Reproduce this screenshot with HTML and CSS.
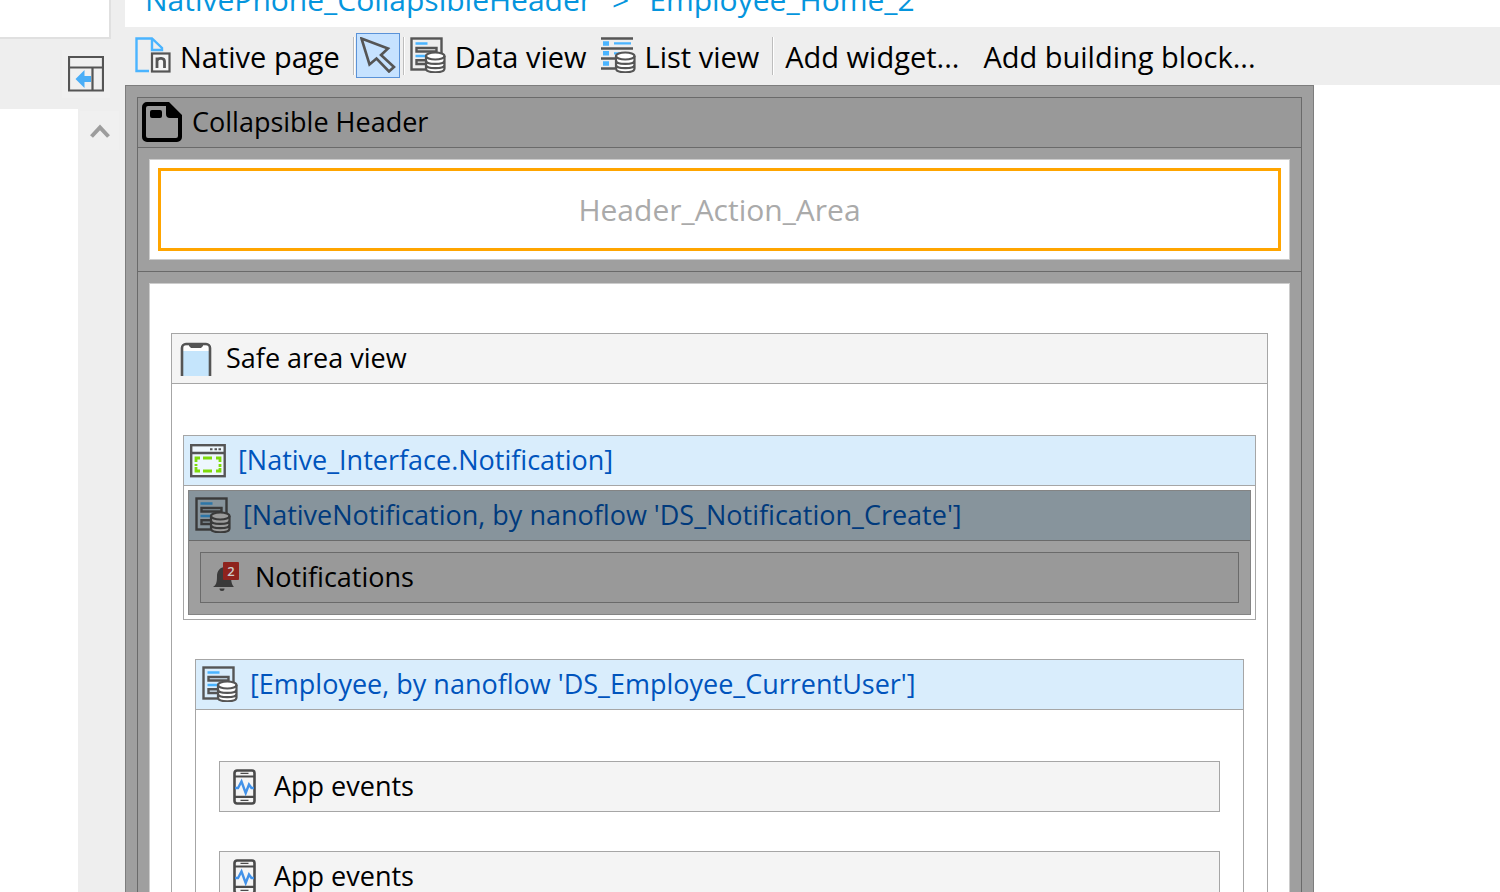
FILE: index.html
```
<!DOCTYPE html>
<html lang="en">
<head>
<meta charset="utf-8">
<title>Employee_Home_2</title>
<link rel="stylesheet" href="styles.css">
</head>
<body>
<svg class="sprite" aria-hidden="true">
  <symbol id="db" viewBox="0 0 36 36">
    <path d="M16 19v12.500c0 5 18.500 5 18.500 0V19z" fill="#fff"/>
    <ellipse cx="25.250" cy="19" rx="9.250" ry="3.800" fill="#fff"/>
    <path d="M16 19v12.500c0 5 18.500 5 18.500 0V19M16 23.200c0 5 18.500 5 18.500 0M16 27.400c0 5 18.500 5 18.500 0" fill="none" stroke="#555" stroke-width="2.200"/>
    <ellipse cx="25.250" cy="19" rx="9.250" ry="3.500" fill="none" stroke="#555" stroke-width="2.200"/>
  </symbol>
  <symbol id="dataview" viewBox="0 0 36 36">
    <rect x="1.500" y="1.500" width="30" height="31" fill="none" stroke="#555" stroke-width="2.400"/>
    <path d="M5.500 6.500h12M5.500 19h12" stroke="#4ab4ff" stroke-width="2.600"/>
    <path d="M6.500 11h20v3.500h-20zM6.500 23.200h10v3.800h-10z" fill="none" stroke="#555" stroke-width="2.400"/>
    <use href="#db"/>
  </symbol>
  <symbol id="phone" viewBox="0 -2 24 38">
    <rect x="1.500" y="1.500" width="20" height="33" rx="2.500" fill="#f4f4f4" stroke="#4a4a4a" stroke-width="2.600"/>
    <path d="M1 7.500h21M1 27.800h21" stroke="#4a4a4a" stroke-width="2.200"/>
    <path d="M7.500 4.400h8M7.500 31.300h8" stroke="#4a4a4a" stroke-width="1.200"/>
    <path d="M2 19h3l3.500-6.500L12.700 24l3.300-8.500L18.500 19H21" fill="none" stroke="#4191e8" stroke-width="2.400"/>
  </symbol>
</svg>

<div class="app">
  <aside class="side">
    <div class="side-field"></div>
    <button class="dock" aria-label="Collapse pane">
      <svg width="36" height="36" viewBox="0 0 36 36"><path d="M1 1h34v33.500H1zM1 11.500h34M24.500 12v22" fill="none" stroke="#555" stroke-width="2.200"/><path d="M7.500 23l9-9v6H23v6h-6.500v6z" fill="#4aaef7"/></svg>
    </button>
    <div class="side-body">
      <div class="tree"></div>
      <div class="scroll">
        <button class="scroll-up" aria-label="Scroll up"><svg width="20" height="16" viewBox="0 0 20 16"><path d="M1.500 13.500L10 4.500l8.500 9" fill="none" stroke="#9d9d9d" stroke-width="4"/></svg></button>
      </div>
    </div>
  </aside>

  <main class="work">
    <nav class="crumbs"><a href="#">NativePhone_CollapsibleHeader</a><span>&gt;</span><a href="#">Employee_Home_2</a></nav>

    <div class="toolbar">
      <button class="tool">
        <svg width="36" height="36" viewBox="0 0 36 36"><path d="M14 34H1.500V1.500H17l10 9.500v2H17V2" fill="none" stroke="#4ab4ff" stroke-width="2.400"/><rect x="17" y="16.500" width="17.500" height="18" fill="#f4f4f4" stroke="#555" stroke-width="2.200"/><path d="M22 31V20.500M22 23.500c1.500-3 7.500-3 7.500 1V31" fill="none" stroke="#555" stroke-width="2.800"/></svg>
        Native page
      </button>
      <span class="sep"></span>
      <button class="pointer" aria-label="Select">
        <svg width="36" height="36" viewBox="0 0 36 36"><path d="M1.500 1.500l8 26 7-6L29 34.500l5-4.500-13-12 7-6.500z" fill="none" stroke="#555" stroke-width="2.600"/></svg>
      </button>
      <span class="sep"></span>
      <button class="tool"><svg width="36" height="36"><use href="#dataview"/></svg>Data view</button>
      <button class="tool list">
        <svg width="36" height="36" viewBox="0 0 36 36"><path d="M1 1.500h32M1 11.500h32M1 21.500h14M1 31.500h14" stroke="#555" stroke-width="2.400"/><path d="M3 4.200h6v4.600H3zM3 14h6v4.600H3zM3 24.200h6v4.600H3zM14 5.200h17v2.400H14zM14 15.200h6v2.400h-6z" fill="#4ab4ff"/><use href="#db"/></svg>
        List view
      </button>
      <span class="sep"></span>
      <button class="tool">Add widget...</button>
      <button class="tool">Add building block...</button>
    </div>

    <div class="canvas">
      <div class="frame">
        <section class="layout">
          <header class="bar bar-layout">
            <svg width="40" height="40" viewBox="0 0 40 40"><path fill-rule="evenodd" d="M5 0h22l13 13v22a5 5 0 0 1-5 5H5a5 5 0 0 1-5-5V5a5 5 0 0 1 5-5zM6 4a2 2 0 0 0-2 2v28a2 2 0 0 0 2 2h28a2 2 0 0 0 2-2V16h-8a4 4 0 0 1-4-4V4z"/><rect x="8" y="8" width="12" height="8" rx="2"/></svg>
            Collapsible Header
          </header>
          <div class="region">
            <div class="sheet slot-sheet"><div class="slot">Header_Action_Area</div></div>
          </div>
          <div class="region content">
            <div class="sheet page">
              <section class="widget safe">
                <header class="bar">
                  <svg width="32" height="36" viewBox="0 -2 32 36"><path d="M2.500 4h27v30h-27z" fill="#fff"/><path d="M2.500 9h27v25h-27z" fill="#c5e5fc"/><path d="M2 34V6a4 4 0 0 1 4-4h20a4 4 0 0 1 4 4v28" fill="none" stroke="#555" stroke-width="2.600"/><path d="M9 1h14v3l-2 2H11L9 4z" fill="#555"/></svg>
                  Safe area view
                </header>
                <div class="safe-body">
                  <section class="widget snippet">
                    <header class="bar bar-data">
                      <svg width="36" height="36" viewBox="0 -2 36 36"><rect x="1.200" y="1.200" width="33.500" height="31" fill="#eef7fd" stroke="#555" stroke-width="2.400"/><path d="M1 9h34" stroke="#555" stroke-width="2.400"/><path d="M20 5.200h2.500M24.500 5.200H27M28.500 5.200H31" stroke="#555" stroke-width="2"/><path d="M6 18v-4h4M13 14h9M26 14h4v4M30 20v3M30 24v3h-4M22 27h-9M10 27H6v-4M6 22v-2" fill="none" stroke="#7edb0a" stroke-width="2.800"/></svg>
                      [Native_Interface.Notification]
                    </header>
                    <div class="nested">
                      <header class="bar bar-data bar-dim"><svg width="36" height="36" viewBox="0 0 36 36"><rect x="1.500" y="1.500" width="30" height="31" fill="none" stroke="#3a3a3a" stroke-width="2.400"/><path d="M5.500 6.500h12M5.500 19h12" stroke="#2d76a8" stroke-width="2.600"/><path d="M6.500 11h20v3.500h-20zM6.500 23.200h10v3.800h-10z" fill="none" stroke="#3a3a3a" stroke-width="2.400"/><path d="M16 19v12.500c0 5 18.500 5 18.500 0V19c0-5-18.500-5-18.500 0z" fill="#9b9b9b"/><path d="M16 19v12.500c0 5 18.500 5 18.500 0V19M16 23.200c0 5 18.500 5 18.500 0M16 27.400c0 5 18.500 5 18.500 0" fill="none" stroke="#3a3a3a" stroke-width="2.200"/><ellipse cx="25.250" cy="19" rx="9.250" ry="3.500" fill="none" stroke="#3a3a3a" stroke-width="2.200"/></svg>[NativeNotification, by nanoflow 'DS_Notification_Create']</header>
                      <div class="nested-body">
                        <div class="bar leaf leaf-dim">
                          <span class="bell"><svg width="28" height="30" viewBox="0 0 28 30"><path d="M1 25c3-2 4-4 4-11 0-5 3-9 8-9 3 0 6 3 6 9s1 9 3 11zM7.500 26.500h5a2.500 2.500 0 0 1-5 0z" fill="#3a3a3a"/><rect x="11" y="0" width="16" height="18" rx="1" fill="#8f231d"/></svg><span class="badge">2</span></span>
                          Notifications
                        </div>
                      </div>
                    </div>
                  </section>
                  <section class="widget employee">
                    <header class="bar bar-data"><svg width="36" height="36"><use href="#dataview"/></svg>[Employee, by nanoflow 'DS_Employee_CurrentUser']</header>
                    <div class="employee-body">
                      <div class="bar leaf events"><svg width="24" height="38"><use href="#phone"/></svg>App events</div>
                      <div class="bar leaf events"><svg width="24" height="38"><use href="#phone"/></svg>App events</div>
                    </div>
                  </section>
                </div>
              </section>
            </div>
          </div>
        </section>
      </div>
    </div>
  </main>
</div>
</body>
</html>
```
FILE: styles.css
```
* { box-sizing: border-box; }
body {
  margin: 0;
  height: 100vh;
  overflow: hidden;
  background: #fff;
  color: #000;
  font-family: "Open Sans", "Noto Sans", sans-serif;
  font-size: 27px;
}
button { font: inherit; color: inherit; border: 0; background: none; padding: 0; }
svg { flex: none; display: block; }
.sprite { position: absolute; width: 0; height: 0; }

.app { display: flex; height: 100%; }

/* Left pane */
.side { flex: none; width: 125px; display: flex; flex-direction: column; background: #eee; }
.side-field { height: 39px; margin-right: 14px; background: #fff; border: solid #e0e0e0; border-width: 0 2px 2px 0; flex: none; }
.dock { display: flex; align-items: center; justify-content: center; width: 48px; height: 48px; margin: 11px 15px 11px auto; background: #f0f0f0; flex: none; }
.side-body { flex: 1; display: flex; }
.tree { width: 78px; background: #fff; }
.scroll { flex: 1; padding: 2px 6px 0 2px; background: #eee; }
.scroll-up { width: 100%; height: 39px; background: #f0f0f0; display: flex; align-items: center; justify-content: center; }

/* Work area */
.work { flex: 1; min-width: 0; display: flex; flex-direction: column; }
.crumbs { flex: none; display: flex; align-items: flex-end; gap: 20px; height: 27px; padding: 0 20px 7px; overflow: hidden; font-size: 30px; line-height: 40px; color: #0595dd; white-space: nowrap; }
.crumbs a { color: inherit; text-decoration: none; }

.toolbar { flex: none; display: flex; align-items: center; height: 58px; padding: 2px 10px 0; background: #eee; font-size: 29px; line-height: 40px; white-space: nowrap; }
.tool { display: flex; align-items: center; gap: 9px; margin-right: 13px; }
.tool svg { margin-bottom: 4px; }
.tool + .tool { margin-left: 11px; }
.tool + .tool.list { margin-left: 0; }
.sep { width: 2px; height: 38px; margin-bottom: 2px; border-left: 1px solid #bdbdbd; background: #fff; }
.sep + .tool { margin-left: 5px; }
.sep:last-of-type + .tool { margin-left: 11px; }
.pointer { width: 44px; height: 45px; margin: 0 3px 4px 1px; border: 1px solid #5a92d8; background: #c6e2ff; display: flex; align-items: center; justify-content: center; }

.canvas { flex: 1; min-height: 0; overflow: hidden; padding-right: 186px; }
.frame { padding: 11px; border: 1px solid #7d7d7d; background: #9f9f9f; }
.layout { border: 1px solid #6a6a6a; }

.bar { display: flex; align-items: center; gap: 14px; height: 50px; padding: 0 8px 2px; border-bottom: 1px solid #a6a6a6; background: #f4f4f4; line-height: 36px; white-space: nowrap; }
.bar-layout { padding: 0 4px 2px; gap: 10px; background: #999; border-color: #6a6a6a; }
.bar-data { gap: 12px; padding: 0 6px 2px; background: #d9edfc; color: #0054bd; }
.bar-dim { background: #87949c; border-color: #6a6a6a; color: #003a7c; }

.region { padding: 11px; }
.content { border-top: 1px solid #6a6a6a; }
.sheet { background: #fff; border: 1px solid #ccc; }
.slot-sheet { padding: 8px; }
.slot { display: flex; align-items: center; justify-content: center; height: 83px; border: 3px solid #ffa500; color: #aaa; font-size: 30px; }
.page { padding: 49px 21px; }

.widget { border: 1px solid #a6a6a6; background: #fff; }
.safe-body { padding: 51px 11px; }
.snippet { padding-bottom: 4px; }
.nested { margin: 4px 4px 0; border: 1px solid #848484; background: #9f9f9f; }
.nested-body { padding: 11px; }
.leaf { height: 51px; border: 1px solid #a6a6a6; }
.leaf-dim { background: #999; border-color: #6a6a6a; padding-left: 11px; gap: 15px; }
.bell { position: relative; }
.badge { position: absolute; top: 0; right: 1px; width: 16px; text-align: center; font-size: 13px; line-height: 18px; font-weight: 600; color: #ccc; }
.employee { margin: 39px 12px 0; }
.employee-body { display: flex; flex-direction: column; gap: 39px; padding: 51px 23px; }
.events { padding-left: 13px; gap: 17px; }
```
